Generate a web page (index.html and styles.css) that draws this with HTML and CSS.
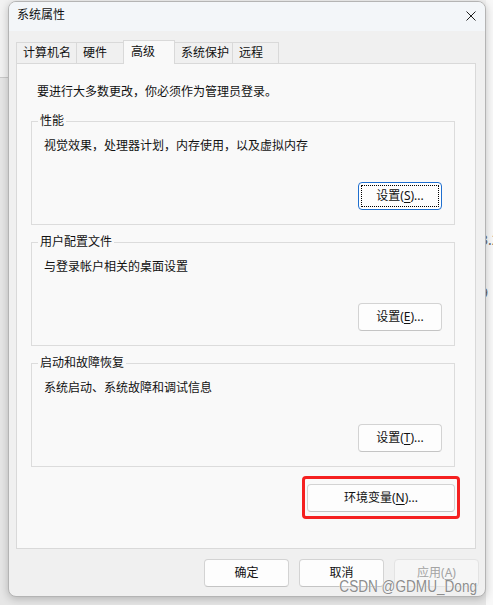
FILE: index.html
```html
<!DOCTYPE html>
<html lang="zh-CN">
<head>
<meta charset="utf-8">
<title>系统属性</title>
<link rel="stylesheet" href="styles.css">
</head>
<body>
<div class="desktop">
  <div class="bg-text bg-text-a">3.2</div>
  <div class="bg-text bg-text-b">9</div>
  <div class="window">
    <div class="titlebar">
      <span class="title">系统属性</span>
      <svg class="close" width="10" height="10" viewBox="0 0 10 10"><path d="M0.5 0.5L9.5 9.5M9.5 0.5L0.5 9.5" stroke="#1f1f1f" stroke-width="1" fill="none"/></svg>
    </div>
    <div class="content">
      <div class="tabs">
        <div class="tab t1">计算机名</div>
        <div class="tab t2">硬件</div>
        <div class="tab t3 active">高级</div>
        <div class="tab t4">系统保护</div>
        <div class="tab t5">远程</div>
      </div>
      <div class="panel">
        <p class="intro">要进行大多数更改，你必须作为管理员登录。</p>
        <div class="group">
          <div class="legend">性能</div>
          <div class="desc">视觉效果，处理器计划，内存使用，以及虚拟内存</div>
          <button class="btn set focus">设置(<u>S</u>)...</button>
        </div>
        <div class="group">
          <div class="legend">用户配置文件</div>
          <div class="desc">与登录帐户相关的桌面设置</div>
          <button class="btn set">设置(<u>E</u>)...</button>
        </div>
        <div class="group">
          <div class="legend">启动和故障恢复</div>
          <div class="desc">系统启动、系统故障和调试信息</div>
          <button class="btn set">设置(<u>T</u>)...</button>
        </div>
        <div class="env-row">
          <div class="highlight"><button class="btn env">环境变量(<u>N</u>)...</button></div>
        </div>
      </div>
    </div>
    <div class="footer">
      <button class="btn foot">确定</button>
      <button class="btn foot">取消</button>
      <button class="btn foot disabled">应用(<u>A</u>)</button>
    </div>
  </div>
  <div class="watermark">CSDN @GDMU_Dong</div>
</div>
</body>
</html>
```
FILE: styles.css
```css
* { box-sizing: border-box; }
html, body { margin: 0; padding: 0; }
body {
  width: 493px;
  height: 605px;
  overflow: hidden;
  background: #ececec;
  font-family: "Noto Sans", "Noto Sans CJK SC", sans-serif;
  font-size: 12px;
  color: #111;
}
.desktop {
  position: relative;
  width: 493px;
  height: 605px;
  padding-top: 1px;
  padding-left: 8px;
  background:
    linear-gradient(to right, transparent 486px, #f8f8f8 486px) ,
    linear-gradient(to bottom, #f2f2f2 0, #f2f2f2 77px, #c9c9c9 77px, #c9c9c9 78px, #e6e6e6 78px);
}
.bg-text {
  position: absolute;
  left: 480px;
  font-size: 14px;
  color: #666;
  line-height: 16px;
}
.bg-text-a { top: 232px; }
.bg-text-b { top: 285px; }

.window {
  position: relative;
  z-index: 1;
  width: 478px;
  height: 596px;
  border: 1px solid #b4b4b4;
  border-radius: 8px;
  background: #f0f0f0;
  overflow: hidden;
  box-shadow: 0 2px 8px rgba(0,0,0,0.22);
}
.titlebar {
  height: 29px;
  background: #f3f6f9;
  display: flex;
  justify-content: space-between;
  align-items: flex-start;
  padding-top: 5px;
  padding-left: 8px;
}
.title { line-height: 16px; }
.close { margin-top: 4px; margin-right: 9px; display: block; }

.content {
  padding: 9px 0 0 7px;
}
.tabs {
  display: flex;
  align-items: flex-end;
  height: 23px;
}
.tab {
  height: 21px;
  border: 1px solid #d9d9d9;
  border-bottom: none;
  background: #f0f0f0;
  padding-left: 6px;
  line-height: 20px;
  margin-left: -1px;
  white-space: nowrap;
}
.t1 { width: 61px; margin-left: 0; }
.t2 { width: 48px; }
.t3 { width: 52px; }
.t4 { width: 59px; }
.t5 { width: 47px; }
.tab.active {
  position: relative;
  z-index: 2;
  height: 24px;
  margin-bottom: -1px;
  background: #f9f9f9;
  padding-left: 7px;
  line-height: 21px;
}
.panel {
  width: 460px;
  height: 486px;
  border: 1px solid #d9d9d9;
  background: #f9f9f9;
  padding: 20px 0 0 14px;
  display: flex;
  flex-direction: column;
}
.intro {
  margin: 0 0 0 6px;
  line-height: 16px;
}
.group {
  width: 424px;
  height: 104px;
  border: 1px solid #dcdcdc;
  margin-top: 17px;
  display: flex;
  flex-direction: column;
}
.intro + .group { margin-top: 21px; }
.legend {
  width: max-content;
  margin-top: -9px;
  margin-left: 6px;
  padding: 0 2px;
  background: #f9f9f9;
  line-height: 16px;
}
.desc {
  margin-top: 9px;
  margin-left: 12px;
  line-height: 16px;
}
.btn {
  font-family: inherit;
  font-size: 12px;
  color: #111;
  height: 28px;
  padding: 0;
  line-height: 26px;
  border: 1px solid #d3d3d3;
  border-bottom-color: #c4c4c4;
  border-radius: 4px;
  background: #fdfdfd;
  white-space: nowrap;
}
.btn u { text-underline-offset: 2px; }
.set {
  width: 84px;
  margin-top: auto;
  margin-bottom: 14px;
  margin-right: 12px;
  align-self: flex-end;
}
.focus {
  border: 1px solid #1f6fcf;
  box-shadow: inset 0 0 0 1px #ffffff;
  outline: 1px dotted #000;
  outline-offset: -4px;
}
.env-row {
  margin-top: 9px;
  display: flex;
  justify-content: flex-end;
  padding-right: 15px;
}
.highlight {
  border: 3px solid #f52020;
  border-radius: 4px;
  padding: 5px 2px 4px 2px;
}
.env { width: 148px; display: block; }
.footer {
  display: flex;
  justify-content: flex-end;
  gap: 10px;
  padding: 10px 6px 0 0;
}
.foot { width: 85px; }
.foot.disabled {
  background: #f6f6f6;
  border-color: #e3e3e3;
  color: #a3a3a3;
}
.watermark {
  position: absolute;
  z-index: 3;
  right: 16px;
  top: 578px;
  font-family: "Liberation Sans", Arial, sans-serif;
  font-size: 16px;
  line-height: 18px;
  color: #8d8d8d;
  transform: scaleX(0.85);
  transform-origin: right center;
  text-shadow: 0 0 1px #fff, 0 0 1px #fff;
}
```
